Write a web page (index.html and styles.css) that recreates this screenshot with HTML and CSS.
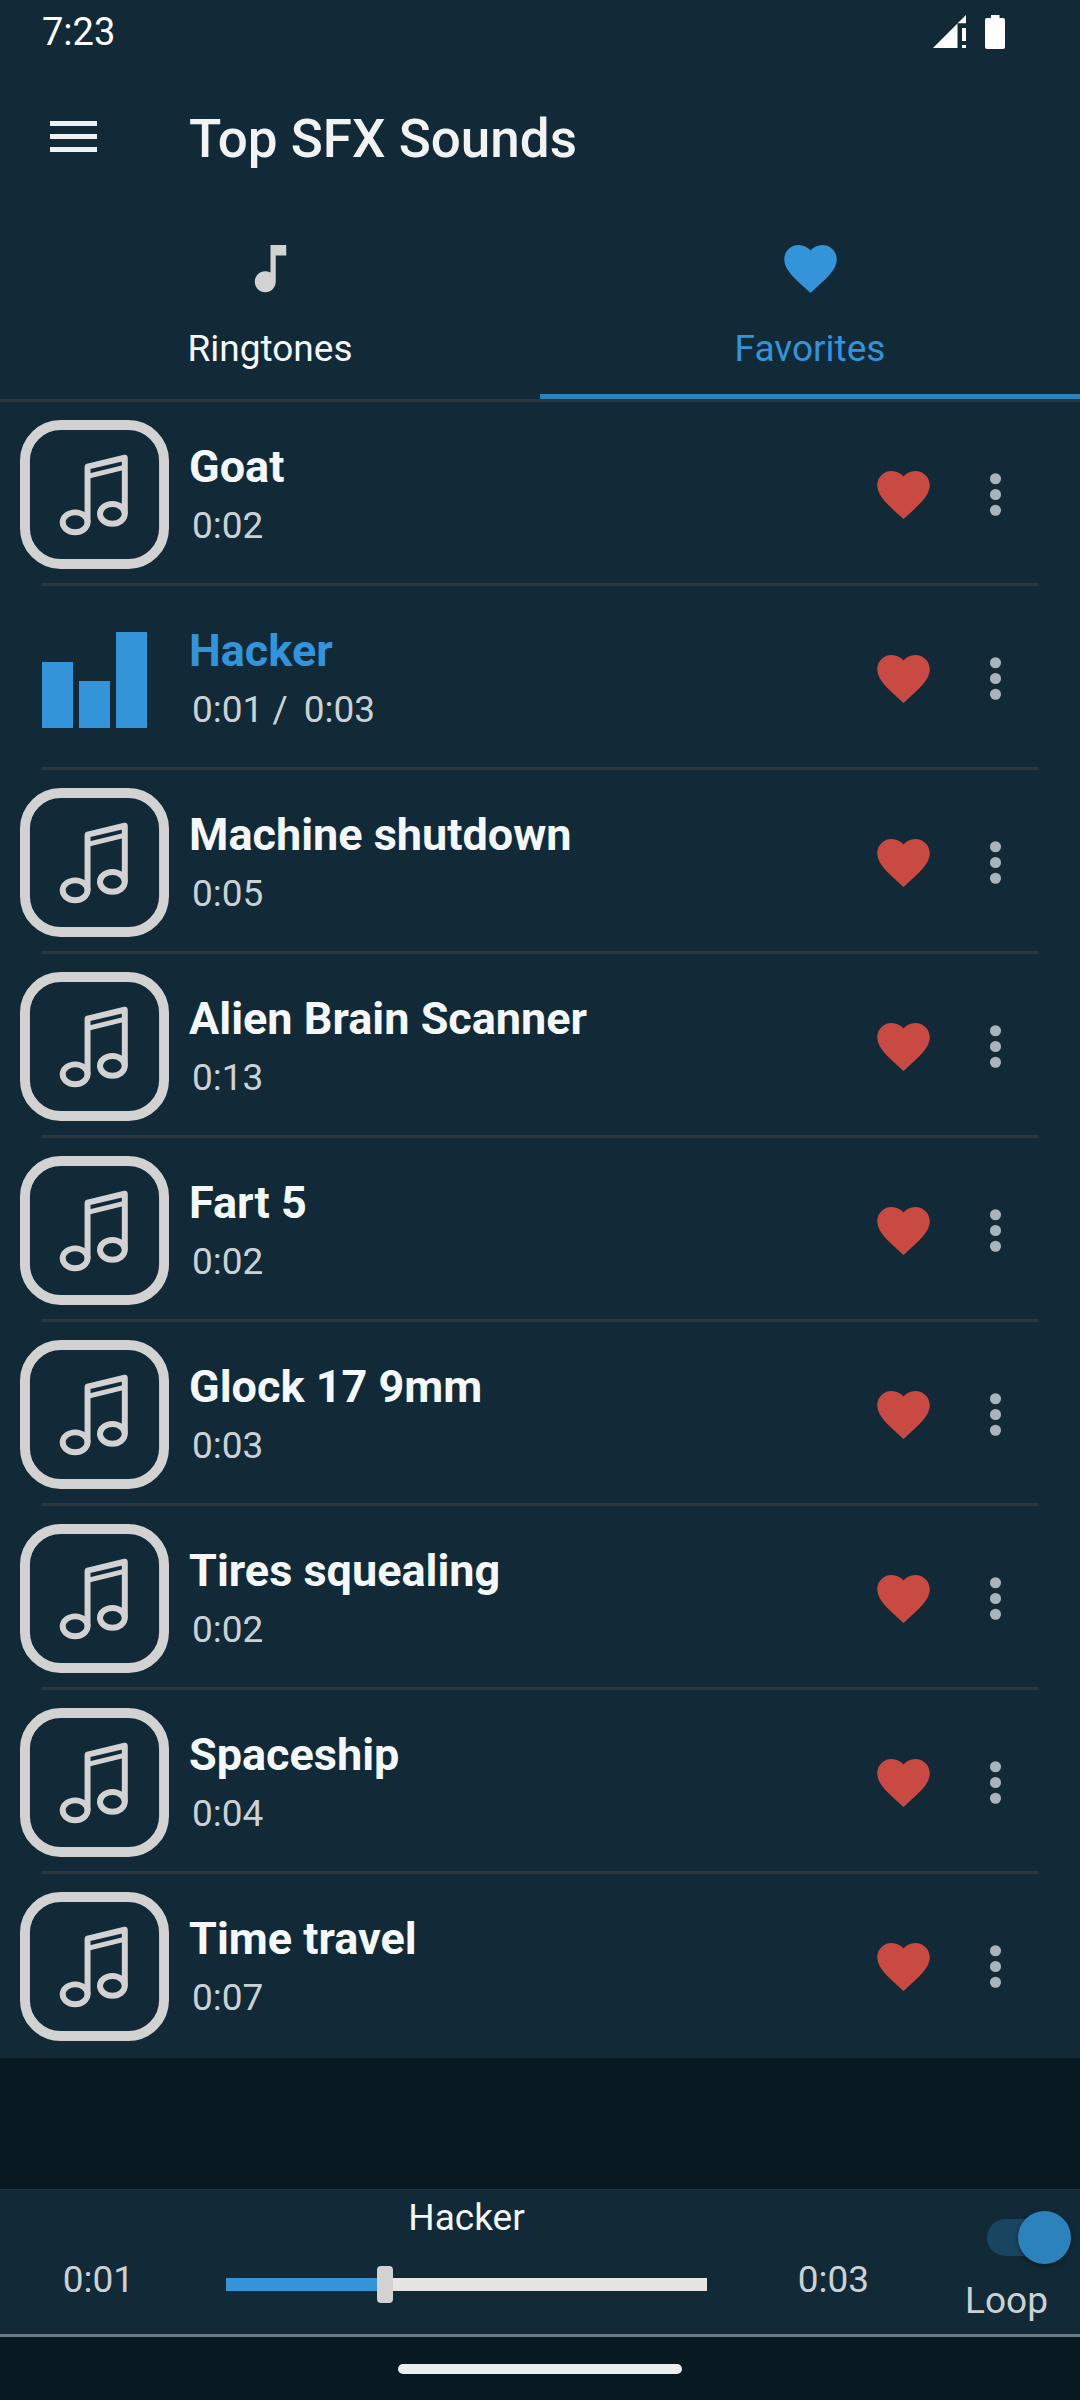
FILE: index.html
```html
<!DOCTYPE html>
<html lang="en">
<head>
<meta charset="utf-8">
<meta name="viewport" content="width=device-width, initial-scale=1">
<title>Top SFX Sounds</title>
<link rel="stylesheet" href="styles.css">
</head>
<body>
<svg class="sprite" aria-hidden="true">
  <symbol id="heart" viewBox="0 0 24 24"><path d="M12 21.35l-1.45-1.32C5.4 15.36 2 12.28 2 8.5 2 5.42 4.42 3 7.5 3c1.74 0 3.41.81 4.5 2.09C13.09 3.81 14.76 3 16.5 3 19.58 3 22 5.42 22 8.5c0 3.78-3.4 6.86-8.55 11.54L12 21.35z"/></symbol>
  <symbol id="note" viewBox="0 0 24 24"><path d="M12 3v10.55c-.59-.34-1.27-.55-2-.55-2.21 0-4 1.79-4 4s1.79 4 4 4 4-1.79 4-4V7h4V3h-6z"/></symbol>
  <symbol id="more" viewBox="0 0 24 24"><circle cx="12" cy="6" r="2.1"/><circle cx="12" cy="12" r="2.1"/><circle cx="12" cy="18" r="2.1"/></symbol>
  <symbol id="cover" viewBox="0 0 150 150">
    <g fill="none" stroke="currentColor">
      <rect x="5" y="5" width="140" height="140" rx="36" stroke-width="10"/>
      <g stroke-width="6" stroke-linejoin="round">
        <ellipse cx="55.500" cy="103" rx="12.500" ry="10"/>
        <ellipse cx="93" cy="94.500" rx="12.500" ry="10"/>
        <path d="M68 103V47l37.500-9v56.500"/>
        <path d="M69 56.500l35-8.500" stroke-width="5"/>
      </g>
    </g>
  </symbol>
</svg>

<div class="app">
  <div class="status">
    <span>7:23</span>
    <span class="status-icons">
      <svg class="signal" viewBox="0 0 33 33" aria-hidden="true"><path d="M0 33L24.500 8.500V33zM24.500 8.300L33 0v8.300zM29 13h4v13h-4zM29 30h4v3h-4z"/></svg>
      <svg class="battery" viewBox="0 0 20 34" aria-hidden="true"><path d="M6 0h8.500v3H18q2 0 2 2v27q0 2-2 2H2q-2 0-2-2V5q0-2 2-2h4z"/></svg>
    </span>
  </div>

  <header class="app-bar">
    <button class="menu" type="button" aria-label="Open menu"><span></span><span></span><span></span></button>
    <h1>Top SFX Sounds</h1>
  </header>

  <nav class="tabs">
    <a class="tab" href="#ringtones"><svg class="icon" aria-hidden="true"><use href="#note"/></svg><span>Ringtones</span></a>
    <a class="tab active" href="#favorites" aria-current="page"><svg class="icon" aria-hidden="true"><use href="#heart"/></svg><span>Favorites</span></a>
  </nav>

  <ul class="sounds">
    <li class="sound">
      <svg class="cover" aria-hidden="true"><use href="#cover"/></svg>
      <div class="info"><h2>Goat</h2><p>0:02</p></div>
      <button class="action like" type="button" aria-label="Remove Goat from favorites"><svg class="icon"><use href="#heart"/></svg></button>
      <button class="action more" type="button" aria-label="More options for Goat"><svg class="icon"><use href="#more"/></svg></button>
    </li>
    <li class="sound playing">
      <div class="cover bars" aria-hidden="true"><span class="bar mid"></span><span class="bar low"></span><span class="bar high"></span></div>
      <div class="info"><h2>Hacker</h2><p><span>0:01 /</span><span>0:03</span></p></div>
      <button class="action like" type="button" aria-label="Remove Hacker from favorites"><svg class="icon"><use href="#heart"/></svg></button>
      <button class="action more" type="button" aria-label="More options for Hacker"><svg class="icon"><use href="#more"/></svg></button>
    </li>
    <li class="sound">
      <svg class="cover" aria-hidden="true"><use href="#cover"/></svg>
      <div class="info"><h2>Machine shutdown</h2><p>0:05</p></div>
      <button class="action like" type="button" aria-label="Remove Machine shutdown from favorites"><svg class="icon"><use href="#heart"/></svg></button>
      <button class="action more" type="button" aria-label="More options for Machine shutdown"><svg class="icon"><use href="#more"/></svg></button>
    </li>
    <li class="sound">
      <svg class="cover" aria-hidden="true"><use href="#cover"/></svg>
      <div class="info"><h2>Alien Brain Scanner</h2><p>0:13</p></div>
      <button class="action like" type="button" aria-label="Remove Alien Brain Scanner from favorites"><svg class="icon"><use href="#heart"/></svg></button>
      <button class="action more" type="button" aria-label="More options for Alien Brain Scanner"><svg class="icon"><use href="#more"/></svg></button>
    </li>
    <li class="sound">
      <svg class="cover" aria-hidden="true"><use href="#cover"/></svg>
      <div class="info"><h2>Fart 5</h2><p>0:02</p></div>
      <button class="action like" type="button" aria-label="Remove Fart 5 from favorites"><svg class="icon"><use href="#heart"/></svg></button>
      <button class="action more" type="button" aria-label="More options for Fart 5"><svg class="icon"><use href="#more"/></svg></button>
    </li>
    <li class="sound">
      <svg class="cover" aria-hidden="true"><use href="#cover"/></svg>
      <div class="info"><h2>Glock 17 9mm</h2><p>0:03</p></div>
      <button class="action like" type="button" aria-label="Remove Glock 17 9mm from favorites"><svg class="icon"><use href="#heart"/></svg></button>
      <button class="action more" type="button" aria-label="More options for Glock 17 9mm"><svg class="icon"><use href="#more"/></svg></button>
    </li>
    <li class="sound">
      <svg class="cover" aria-hidden="true"><use href="#cover"/></svg>
      <div class="info"><h2>Tires squealing</h2><p>0:02</p></div>
      <button class="action like" type="button" aria-label="Remove Tires squealing from favorites"><svg class="icon"><use href="#heart"/></svg></button>
      <button class="action more" type="button" aria-label="More options for Tires squealing"><svg class="icon"><use href="#more"/></svg></button>
    </li>
    <li class="sound">
      <svg class="cover" aria-hidden="true"><use href="#cover"/></svg>
      <div class="info"><h2>Spaceship</h2><p>0:04</p></div>
      <button class="action like" type="button" aria-label="Remove Spaceship from favorites"><svg class="icon"><use href="#heart"/></svg></button>
      <button class="action more" type="button" aria-label="More options for Spaceship"><svg class="icon"><use href="#more"/></svg></button>
    </li>
    <li class="sound">
      <svg class="cover" aria-hidden="true"><use href="#cover"/></svg>
      <div class="info"><h2>Time travel</h2><p>0:07</p></div>
      <button class="action like" type="button" aria-label="Remove Time travel from favorites"><svg class="icon"><use href="#heart"/></svg></button>
      <button class="action more" type="button" aria-label="More options for Time travel"><svg class="icon"><use href="#more"/></svg></button>
    </li>
  </ul>

  <section class="player" aria-label="Player">
    <span class="time">0:01</span>
    <div class="track">
      <label for="seek">Hacker</label>
      <input class="seek" id="seek" type="range" min="0" max="1000" value="324">
    </div>
    <span class="time">0:03</span>
    <div class="loop">
      <input class="switch" id="loop" type="checkbox" role="switch" checked>
      <label for="loop">Loop</label>
    </div>
  </section>

  <footer class="gesture"><span class="pill"></span></footer>
</div>
</body>
</html>
```
FILE: styles.css
```css
:root {
  --surface: #122a38;
  --backdrop: #081922;
  --line: #2b363b;
  --blue: #3494d9;
  --accent: #2c82bb;
  --text: #f4f8fb;
  --muted: #cbd2d6;
  --grey: #d2d2d3;
}

* { box-sizing: border-box; }

body {
  margin: 0;
  background: var(--backdrop);
  color: var(--text);
  font: 400 37px/44px Roboto, sans-serif;
}

h1, h2, p, ul { margin: 0; padding: 0; }

button {
  padding: 0;
  border: 0;
  background: none;
  cursor: pointer;
}

.sprite { position: absolute; width: 0; height: 0; }

.icon {
  display: block;
  width: 63px;
  height: 63px;
  fill: currentColor;
}

.app {
  display: flex;
  flex-direction: column;
  min-height: 100vh;
}

.status {
  display: flex;
  align-items: center;
  justify-content: space-between;
  height: 63px;
  padding: 0 75px 0 42px;
  background: var(--surface);
  color: #fff;
  font-size: 38px;
}

.status-icons { display: flex; gap: 19px; }
.signal { width: 33px; height: 33px; fill: #fff; }
.battery { width: 20px; height: 34px; fill: #fff; }

.app-bar {
  display: flex;
  align-items: center;
  height: 147px;
  background: var(--surface);
}

.menu {
  display: flex;
  flex-direction: column;
  align-items: center;
  justify-content: center;
  gap: 8px;
  width: 147px;
  height: 147px;
}

.menu span { width: 47px; height: 5px; background: #eef2f5; }

.app-bar h1 {
  padding: 4px 0 0 42px;
  color: #f0f2f3;
  font-size: 53px;
  font-weight: 500;
  line-height: 62px;
}

.tabs {
  display: grid;
  grid-template-columns: 1fr 1fr;
  border-bottom: 3px solid var(--line);
  background: var(--surface);
}

.tab {
  display: flex;
  flex-direction: column;
  align-items: center;
  gap: 27px;
  padding: 27px 0 23px;
  border-bottom: 5px solid transparent;
  color: var(--text);
  text-decoration: none;
}

.tab .icon { color: var(--grey); }
.tab.active { border-color: var(--accent); color: var(--blue); }
.tab.active .icon { color: var(--blue); }

.sounds { list-style: none; background: var(--surface); }

.sound {
  position: relative;
  display: flex;
  align-items: center;
  height: 184px;
  padding: 0 53px 0 20px;
}

.sound:not(:last-child)::after {
  content: "";
  position: absolute;
  right: 42px;
  bottom: 0;
  left: 42px;
  height: 3px;
  background: var(--line);
}

.cover { width: 149px; height: 149px; color: var(--grey); }

.bars {
  display: flex;
  align-items: flex-end;
  justify-content: center;
  gap: 6px;
  padding-bottom: 25px;
}

.bar { width: 31px; background: var(--blue); }
.bar.mid { height: 66px; }
.bar.low { height: 47px; }
.bar.high { height: 96px; }

.info { flex: 1; padding-left: 20px; }

.info h2 {
  font-size: 45px;
  font-weight: 700;
  line-height: 54px;
}

.info p {
  display: flex;
  gap: 16px;
  margin-top: 10px;
  padding-left: 3px;
  color: var(--muted);
}

.playing h2 { color: var(--blue); }

.action { margin-left: 29px; }
.like { color: #c94a42; }
.more { color: #aab5bb; }

.player {
  display: grid;
  grid-template-columns: 194px 1fr 184px 156px;
  margin-top: auto;
  border-top: 1px solid #24343d;
  border-bottom: 3px solid #6c7c86;
  background: var(--surface);
}

.time {
  padding: 68px 0 32px 3px;
  color: var(--muted);
  text-align: center;
}

.track {
  display: flex;
  flex-direction: column;
  align-items: center;
  padding: 6px 33px 0 32px;
}

.seek {
  appearance: none;
  width: 100%;
  height: 37px;
  margin: 26px 0 0;
  background: linear-gradient(to right, var(--blue) 33%, #e6e5e4 33%) center / 100% 13px no-repeat;
}

.seek::-webkit-slider-thumb {
  appearance: none;
  width: 16px;
  height: 37px;
  border-radius: 4px;
  background: #d2d2d3;
}

.loop {
  display: flex;
  flex-direction: column;
  align-items: flex-end;
  padding: 21px 9px 0 0;
  color: var(--muted);
}

.loop label { padding: 15px 23px 0 0; }

.switch {
  appearance: none;
  position: relative;
  width: 84px;
  height: 53px;
  margin: 0;
}

.switch::before {
  content: "";
  position: absolute;
  inset: 8px 8px 8px 0;
  border-radius: 19px;
  background: #1a4560;
}

.switch::after {
  content: "";
  position: absolute;
  top: 0;
  right: 0;
  width: 53px;
  height: 53px;
  border-radius: 50%;
  background: var(--accent);
  box-shadow: 0 2px 5px rgba(0, 0, 0, 0.4);
}

.gesture {
  display: flex;
  justify-content: center;
  padding: 27px 0 26px;
}

.pill {
  width: 284px;
  height: 10px;
  border-radius: 5px;
  background: #ebeef0;
}
```
